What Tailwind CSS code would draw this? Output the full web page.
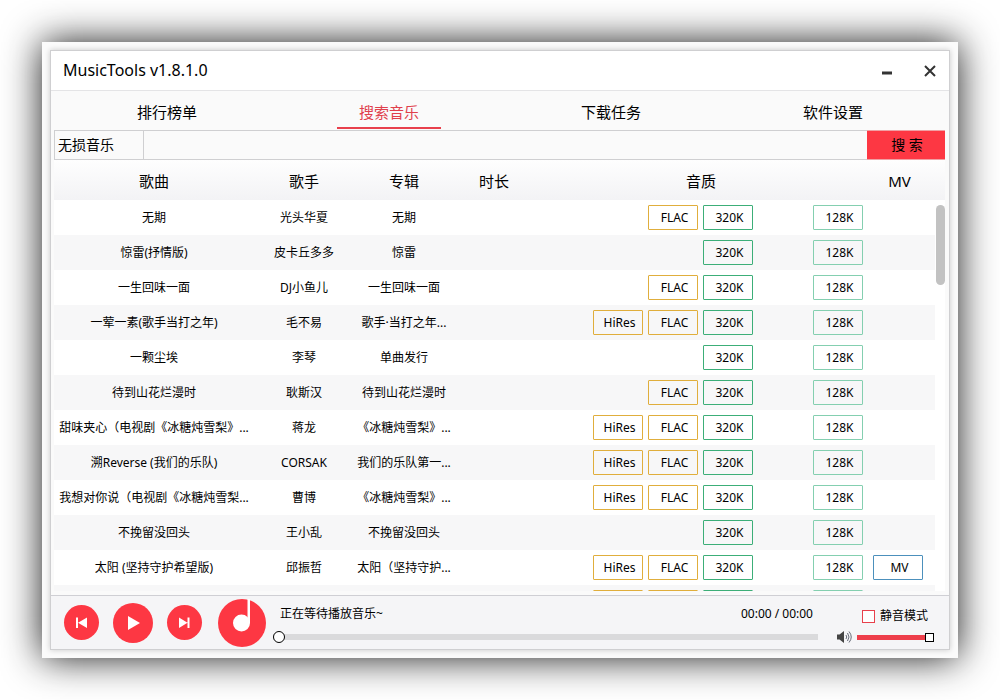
<!DOCTYPE html>
<html lang="zh-CN">
<head>
<meta charset="utf-8">
<meta name="viewport" content="width=device-width, initial-scale=1">
<title>MusicTools v1.8.1.0</title>
<script src="https://cdn.jsdelivr.net/npm/@tailwindcss/browser@4"></script>
</head>
<body class="flex h-screen flex-col bg-white p-[42px] font-['Noto_Sans','Noto_Sans_CJK_SC',sans-serif] text-xs text-black">
<div class="flex min-h-0 flex-1 flex-col bg-[#fbfbfb] p-2 shadow-[0_0_36px_rgba(0,0,0,0.9)]">
  <main class="flex min-h-0 flex-1 flex-col border border-[#cfcfd1] bg-[#fafafa] shadow-[0_0_6px_rgba(0,0,0,0.2)]">

    <header class="flex h-10 shrink-0 items-center border-b border-[#e4e4e6] bg-white pl-3">
      <h1 class="flex-1 pb-0.5 text-base">MusicTools v1.8.1.0</h1>
      <button aria-label="最小化" class="flex h-10 w-11 items-center justify-center">
        <svg class="size-4" viewBox="0 0 16 16"><path d="M2 8.500h10v3H2z" fill="#333"/></svg>
      </button>
      <button aria-label="关闭" class="flex h-10 w-[39px] items-center justify-center">
        <svg class="size-4" viewBox="0 0 16 16"><path d="M3 3l10 10M13 3L3 13" stroke="#333" stroke-width="2" fill="none"/></svg>
      </button>
    </header>

    <nav class="grid h-[39px] shrink-0 grid-cols-4 px-[5px] text-[15px]">
      <a href="#" class="flex items-center justify-center pt-0.5">排行榜单</a>
      <a href="#" aria-current="page" class="flex items-stretch justify-center pb-px text-[#e0404c]"><span class="flex w-[104px] items-center justify-center border-b-2 border-[#e8404c] pt-1.5">搜索音乐</span></a>
      <a href="#" class="flex items-center justify-center pt-0.5">下载任务</a>
      <a href="#" class="flex items-center justify-center pt-0.5">软件设置</a>
    </nav>

    <form class="mr-1 ml-[3px] flex h-[30px] shrink-0" onsubmit="return false">
      <select aria-label="音乐类型" class="w-[90px] appearance-none border border-[#cfcfd1] bg-[#fafafa] px-[3px] text-sm"><option>无损音乐</option></select>
      <input type="text" aria-label="搜索关键字" class="min-w-0 flex-1 border-y border-[#cfcfd1] bg-[#fafafa] px-2 text-sm outline-none">
      <button class="w-[78px] border-y border-[#f0a0a4] bg-[#fd3743] pl-0.5 text-sm whitespace-pre">搜 索</button>
    </form>

    <section class="relative mr-1 ml-[3px] min-h-0 flex-1 overflow-hidden bg-white bg-[linear-gradient(#fefefe,#f3f3f5)] bg-[length:100%_40px] bg-no-repeat pr-2.5">
      <table class="w-full table-fixed border-collapse text-center">
        <colgroup><col class="w-[200px]"><col class="w-[100px]"><col class="w-[100px]"><col class="w-20"><col><col class="w-[67px]"></colgroup>
        <thead>
          <tr class="h-10 text-[15px]">
            <th class="p-0 pt-0.5 font-normal">歌曲</th><th class="p-0 pt-0.5 font-normal">歌手</th><th class="p-0 pt-0.5 font-normal">专辑</th><th class="p-0 pt-0.5 font-normal">时长</th><th class="p-0 pt-0.5 font-normal">音质</th><th class="p-0 pt-0.5 pr-1 font-normal">MV</th>
          </tr>
        </thead>
        <tbody id="songs"></tbody>
      </table>
      <div class="absolute top-[45px] right-0 h-20 w-[9px] rounded-full bg-[#c2c2c2]"></div>
    </section>

    <footer class="mt-1 flex h-[54px] shrink-0 items-center border-t border-[#cfcfd4] bg-[#f5f5f7] pr-[15px] pl-[13px]">
      <button aria-label="上一首" class="size-[35px] shrink-0 rounded-full bg-[#fd3743]">
        <svg viewBox="0 0 35 35"><path d="M12 12.500h2v10.500h-2zM14 17.750L23 12.500v10.500z" fill="#fff"/></svg>
      </button>
      <button aria-label="播放" class="ml-3.5 size-10 shrink-0 rounded-full bg-[#fd3743]">
        <svg viewBox="0 0 40 40"><path d="M15 13v14l12-7z" fill="#fff"/></svg>
      </button>
      <button aria-label="下一首" class="ml-3.5 size-[35px] shrink-0 rounded-full bg-[#fd3743]">
        <svg viewBox="0 0 35 35"><path d="M20.500 12.500h2v10.500h-2zM20.500 17.750L12 12.500v10.500z" fill="#fff"/></svg>
      </button>
      <svg class="ml-4 size-12 shrink-0" viewBox="0 0 48 48"><circle cx="24" cy="24" r="24" fill="#fd3743"/><circle cx="23.500" cy="24" r="8.500" fill="#fff"/><path d="M29.500 0h2.500v24h-2.500z" fill="#fff"/></svg>

      <div class="ml-[7px] flex min-w-0 flex-1 flex-col gap-1 self-stretch pt-2">
        <div class="flex h-5 items-center justify-between pr-[5px] pl-[7px]">
          <span>正在等待播放音乐~</span><span>00:00 / 00:00</span>
        </div>
        <input type="range" aria-label="播放进度" min="0" max="100" value="0" class="h-[18px] w-full appearance-none bg-[linear-gradient(#dadadc,#dadadc)] bg-[length:100%_6px] bg-center bg-no-repeat [&::-webkit-slider-thumb]:size-3 [&::-webkit-slider-thumb]:appearance-none [&::-webkit-slider-thumb]:rounded-full [&::-webkit-slider-thumb]:border [&::-webkit-slider-thumb]:border-black [&::-webkit-slider-thumb]:bg-white">
      </div>

      <div class="ml-[18px] flex w-[98px] flex-col gap-0.5 self-stretch pt-2.5">
        <label class="flex h-5 items-center gap-[5px] pl-[26px]"><input type="checkbox" class="size-[13px] appearance-none border border-[#e8404c] bg-white checked:bg-[#e8404c]">静音模式</label>
        <div class="flex h-[18px] items-center gap-[5px]">
          <svg class="size-4 shrink-0" viewBox="0 0 16 16"><path d="M1 5.500h2.500L8 2v12l-4.500-3.500H1z" fill="#444"/><path d="M10 6q1.500 2 0 4M11.500 4q3 4 0 8M13 2.500q4.500 5.500 0 11" stroke="#666b78" fill="none"/></svg>
          <input type="range" aria-label="音量" min="0" max="100" value="100" class="h-[18px] min-w-0 flex-1 appearance-none bg-[linear-gradient(#ee3f4b,#ee3f4b)] bg-[length:100%_5px] bg-center bg-no-repeat [&::-webkit-slider-thumb]:size-[9px] [&::-webkit-slider-thumb]:appearance-none [&::-webkit-slider-thumb]:border [&::-webkit-slider-thumb]:border-black [&::-webkit-slider-thumb]:bg-white">
        </div>
      </div>
    </footer>
  </main>
</div>

<script>
const songs = [
  ['无期', '光头华夏', '无期', 'F'],
  ['惊雷(抒情版)', '皮卡丘多多', '惊雷', ''],
  ['一生回味一面', 'DJ小鱼儿', '一生回味一面', 'F'],
  ['一荤一素(歌手当打之年)', '毛不易', '歌手·当打之年...', 'HF'],
  ['一颗尘埃', '李琴', '单曲发行', ''],
  ['待到山花烂漫时', '耿斯汉', '待到山花烂漫时', 'F'],
  ['甜味夹心（电视剧《冰糖炖雪梨》...', '蒋龙', '《冰糖炖雪梨》...', 'HF'],
  ['溯Reverse (我们的乐队)', 'CORSAK', '我们的乐队第一...', 'HF'],
  ['我想对你说（电视剧《冰糖炖雪梨...', '曹博', '《冰糖炖雪梨》...', 'HF'],
  ['不挽留没回头', '王小乱', '不挽留没回头', ''],
  ['太阳 (坚持守护希望版)', '邱振哲', '太阳（坚持守护...', 'HFM'],
];
const tag = (text, border) => `<button class="h-[25px] w-[50px] rounded-[1px] border pl-[3px] ${border}">${text}</button>`;
const row = ([song, artist, album, q], label) => `
  <tr class="h-[35px] odd:bg-white even:bg-[#f7f7f8]">
    <td class="p-0 whitespace-nowrap">${song}</td>
    <td class="p-0 whitespace-nowrap">${artist}</td>
    <td class="p-0 whitespace-nowrap">${album}</td>
    <td class="p-0"></td>
    <td class="p-0"><div class="flex justify-end gap-[5px] pr-[5px]">
      ${q.includes('H') ? tag(label('HiRes'), 'border-[#e0ae3c]') : ''}
      ${q.includes('F') ? tag(label('FLAC'), 'border-[#e0ae3c]') : ''}
      ${tag(label('320K'), 'mr-[55px] border-[#3cae78]')}
      ${tag(label('128K'), 'border-[#84cfb0]')}
    </div></td>
    <td class="p-0"><div class="flex pl-[5px]">${q.includes('M') ? tag(label('MV'), 'border-[#4c90bc]') : ''}</div></td>
  </tr>`;
// The last row is still loading: its buttons have no labels yet.
document.getElementById('songs').innerHTML =
  songs.map(s => row(s, t => t)).join('') + row(['', '', '', 'HF'], () => '');
</script>
</body>
</html>
